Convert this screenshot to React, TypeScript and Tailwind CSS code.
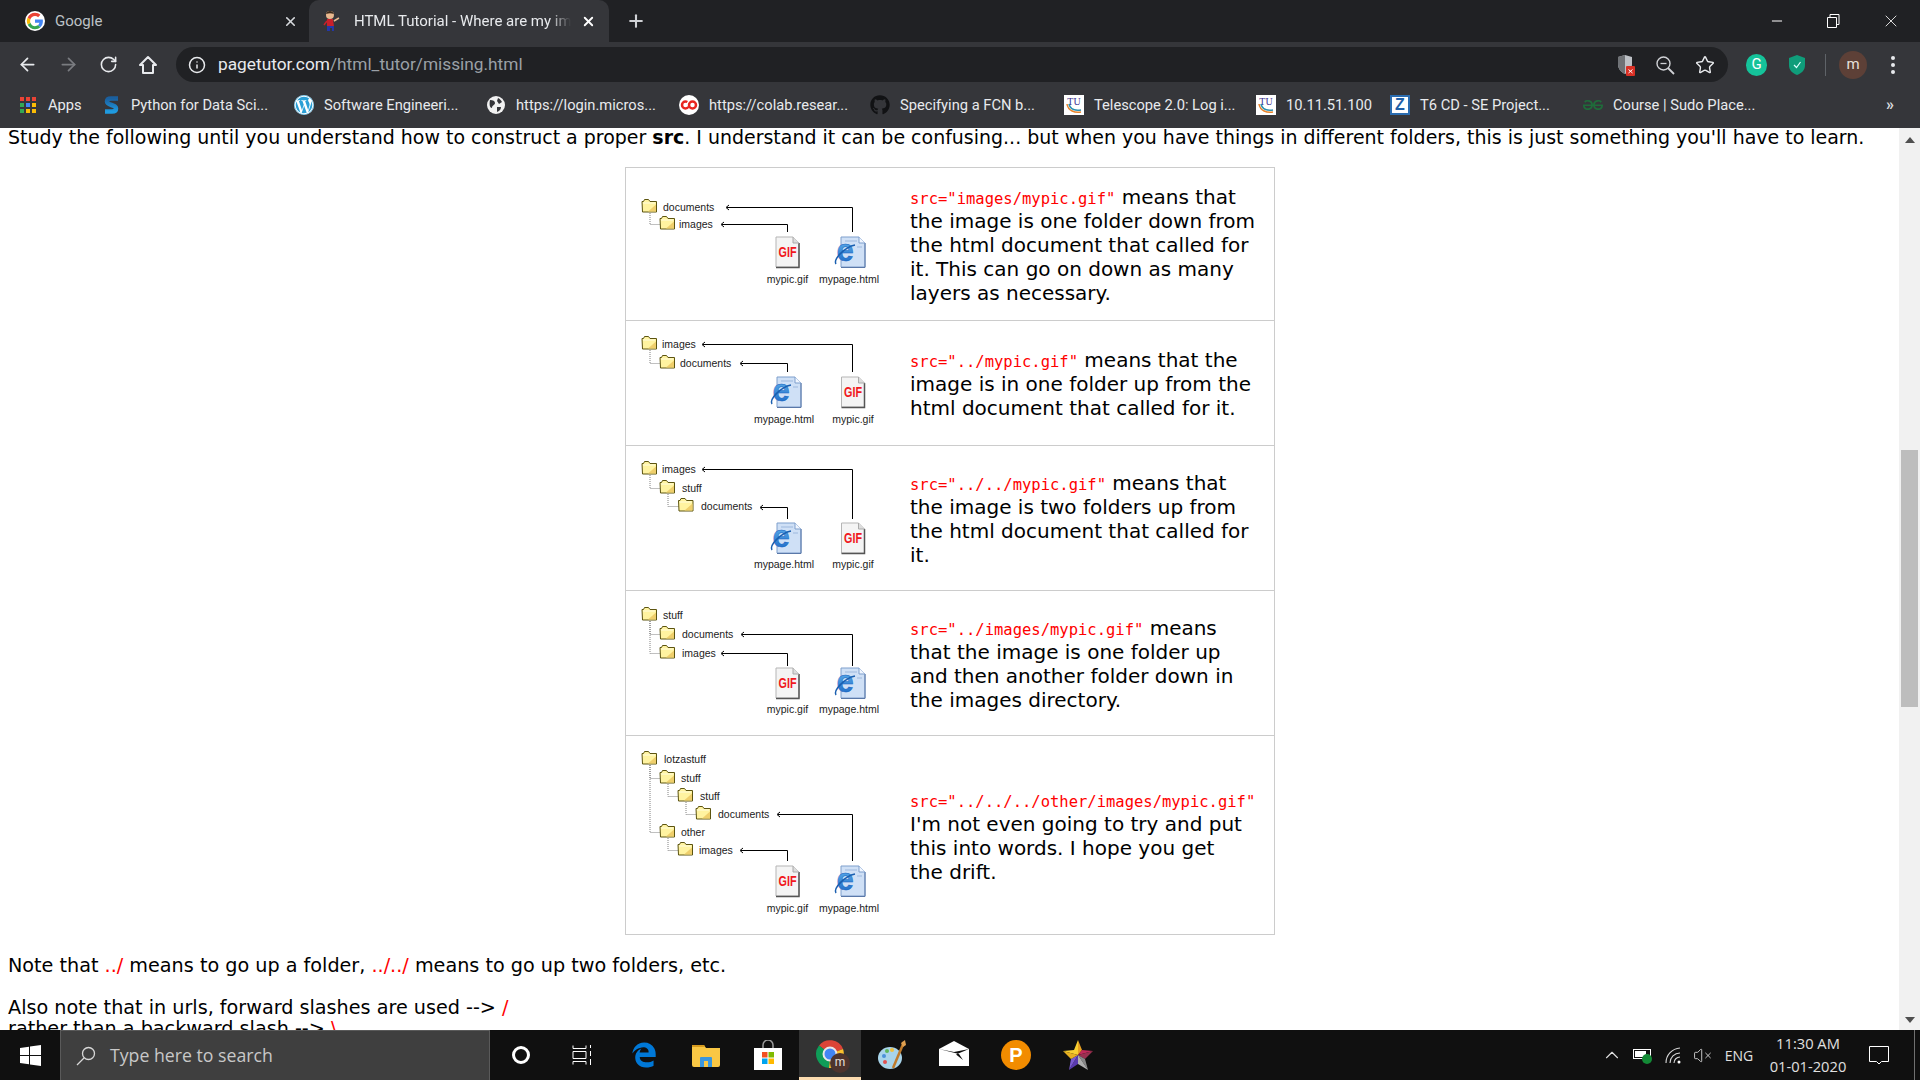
import React from 'react';
import { ArrowLeft, ArrowRight, RotateCw, Info, Star, X, Plus, Minus, ChevronUp, VolumeX } from 'lucide-react';
import { FaWordpress, FaGithub, FaEdgeLegacy } from 'react-icons/fa';
import { SiGeeksforgeeks } from 'react-icons/si';

type FolderNode = { cx: number; y: number; label: string; textX: number; parent?: number };
type Arrow = { from: number; to: number; y: number; bottom: number };
type FileIcon = { kind: 'gif' | 'ie'; cx: number; label: string; labelCx: number };
type Diagram = { top: number; height: number; folders: FolderNode[]; arrows: Arrow[]; files: FileIcon[]; iconY: number; labelY: number };

function Folder({ cx, y }: { cx: number; y: number }) {
  const x = cx - 7.5;
  const t = y - 8;
  return (
    <g>
      <path d={`M${x} ${t + 2.5}h1.5l1-2h4l1.5 2h6.5v10.5h-14z`} fill="#fff3a0" stroke="#5c5410" strokeWidth="1" />
      <path d={`M${x + 6} ${t + 12.5}l8-7v7z`} fill="#efcf6c" />
      <path d={`M${x + 1} ${t + 4}h12`} stroke="#fffde0" strokeWidth="1" />
    </g>
  );
}

function GifFile({ cx, y }: { cx: number; y: number }) {
  const x = cx - 11.5;
  return (
    <g>
      <path d={`M${x} ${y}h17l6 6v24h-23z`} fill="#f4f4f4" stroke="#b5b5b5" />
      <path d={`M${x + 23} ${y + 6}v24.5h-23`} fill="none" stroke="#555" strokeWidth="1.5" />
      <path d={`M${x + 17} ${y}v6h6`} fill="#ddd" stroke="#aaa" />
      <text
        x={cx - 9}
        y={y + 20}
        textLength="18"
        lengthAdjust="spacingAndGlyphs"
        fontFamily="Liberation Sans, sans-serif"
        fontWeight="700"
        fontSize="15"
        fill="#f01820"
      >
        GIF
      </text>
    </g>
  );
}

function IeFile({ cx, y }: { cx: number; y: number }) {
  const x = cx - 8;
  return (
    <g>
      <defs>
        <linearGradient id="ieBlue" x1="0" y1="0" x2="0" y2="1">
          <stop offset="0" stopColor="#6cc0f4" />
          <stop offset="1" stopColor="#1560c0" />
        </linearGradient>
      </defs>
      <path d={`M${x} ${y}h18l6 6v24h-24z`} fill="#cfe0f6" stroke="#7f9fcc" />
      <path d={`M${x + 24} ${y + 6}v24.500h-24`} fill="none" stroke="#5a78a8" />
      <path d={`M${x + 18} ${y}v6h6`} fill="#f0f6ff" stroke="#7f9fcc" />
      <path d={`M${x + 4} ${y + 4}h12M${x + 16} ${y + 10}h5`} stroke="#9db8dd" />
      <text x={cx - 4} y={y + 24} textAnchor="middle" fontFamily="Liberation Sans, sans-serif" fontWeight="700" fontSize="31" fill="url(#ieBlue)" stroke="#1560c0" strokeWidth=".4">
        e
      </text>
      <path d={`M${cx - 13} ${y + 27}c-3 -5 9 -17 19 -19`} fill="none" stroke="#1a5fb0" strokeWidth="1.5" />
    </g>
  );
}

function TreeImage({ d }: { d: Diagram }) {
  return (
    <svg width="284" height={d.height - 1} viewBox={`626 ${d.top} 284 ${d.height - 1}`} className="shrink-0 block">
      {d.folders.map((f, i) => {
        if (f.parent === undefined) return null;
        const p = d.folders[f.parent];
        return (
          <path
            key={i}
            d={`M${p.cx + 0.5} ${p.y + 6}V${f.y + 0.5}H${f.cx - 7}`}
            fill="none"
            stroke="#808080"
            strokeDasharray="1 1"
          />
        );
      })}
      {d.folders.map((f, i) => (
        <g key={i}>
          <Folder cx={f.cx} y={f.y} />
          <text x={f.textX} y={f.y + 4} fontFamily="Liberation Sans, sans-serif" fontSize="10.5" fill="#222">
            {f.label}
          </text>
        </g>
      ))}
      {d.arrows.map((a, i) => (
        <g key={i}>
          <path d={`M${a.from} ${a.y + 0.5}H${a.to + 0.5}V${a.bottom}`} fill="none" stroke="#000" />
          <path d={`M${a.from + 2} ${a.y - 2}l-3 2.500 3 2.500`} fill="none" stroke="#000" />
        </g>
      ))}
      {d.files.map((f, i) => (
        <g key={i}>
          {f.kind === 'gif' ? <GifFile cx={f.cx} y={d.iconY} /> : <IeFile cx={f.cx} y={d.iconY} />}
          <text x={f.labelCx} y={d.labelY} textAnchor="middle" fontFamily="Liberation Sans, sans-serif" fontSize="10.5" fill="#222">
            {f.label}
          </text>
        </g>
      ))}
    </svg>
  );
}

const rows: { d: Diagram; code: string; text: string; width: string }[] = [
  {
    code: 'src="images/mypic.gif"',
    text: ' means that the image is one folder down from the html document that called for it. This can go on down as many layers as necessary.',
    width: 'w-[350px]',
    d: {
      top: 168,
      height: 153,
      folders: [
        { cx: 649.5, y: 207, label: 'documents', textX: 663 },
        { cx: 667.5, y: 224, label: 'images', textX: 679, parent: 0 },
      ],
      arrows: [
        { from: 727, to: 852, y: 207, bottom: 232 },
        { from: 722, to: 787, y: 224, bottom: 232 },
      ],
      files: [
        { kind: 'gif', cx: 787.5, label: 'mypic.gif', labelCx: 787.5 },
        { kind: 'ie', cx: 849, label: 'mypage.html', labelCx: 849 },
      ],
      iconY: 237,
      labelY: 283,
    },
  },
  {
    code: 'src="../mypic.gif"',
    text: ' means that the image is in one folder up from the html document that called for it.',
    width: 'w-[350px]',
    d: {
      top: 321,
      height: 125,
      folders: [
        { cx: 649.5, y: 344, label: 'images', textX: 662 },
        { cx: 667.5, y: 363, label: 'documents', textX: 680, parent: 0 },
      ],
      arrows: [
        { from: 703, to: 852, y: 344, bottom: 372 },
        { from: 741, to: 787, y: 363, bottom: 372 },
      ],
      files: [
        { kind: 'ie', cx: 785, label: 'mypage.html', labelCx: 784 },
        { kind: 'gif', cx: 853, label: 'mypic.gif', labelCx: 853 },
      ],
      iconY: 377,
      labelY: 423,
    },
  },
  {
    code: 'src="../../mypic.gif"',
    text: ' means that the image is two folders up from the html document that called for it.',
    width: 'w-[350px]',
    d: {
      top: 446,
      height: 145,
      folders: [
        { cx: 649.5, y: 469, label: 'images', textX: 662 },
        { cx: 667.5, y: 488, label: 'stuff', textX: 682, parent: 0 },
        { cx: 686, y: 506, label: 'documents', textX: 701, parent: 1 },
      ],
      arrows: [
        { from: 703, to: 852, y: 469, bottom: 519 },
        { from: 761, to: 787, y: 507, bottom: 519 },
      ],
      files: [
        { kind: 'ie', cx: 785, label: 'mypage.html', labelCx: 784 },
        { kind: 'gif', cx: 853, label: 'mypic.gif', labelCx: 853 },
      ],
      iconY: 523,
      labelY: 568,
    },
  },
  {
    code: 'src="../images/mypic.gif"',
    text: ' means that the image is one folder up and then another folder down in the images directory.',
    width: 'w-[350px]',
    d: {
      top: 591,
      height: 145,
      folders: [
        { cx: 649.5, y: 615, label: 'stuff', textX: 663 },
        { cx: 667.5, y: 634, label: 'documents', textX: 682, parent: 0 },
        { cx: 667.5, y: 653, label: 'images', textX: 682, parent: 0 },
      ],
      arrows: [
        { from: 742, to: 852, y: 634, bottom: 666 },
        { from: 722, to: 787, y: 653, bottom: 666 },
      ],
      files: [
        { kind: 'gif', cx: 787.5, label: 'mypic.gif', labelCx: 787.5 },
        { kind: 'ie', cx: 849, label: 'mypage.html', labelCx: 849 },
      ],
      iconY: 668,
      labelY: 713,
    },
  },
  {
    code: 'src="../../../other/images/mypic.gif"',
    text: " I'm not even going to try and put this into words. I hope you get the drift.",
    width: 'w-[340px]',
    d: {
      top: 736,
      height: 199,
      folders: [
        { cx: 649.5, y: 759, label: 'lotzastuff', textX: 664 },
        { cx: 667.5, y: 778, label: 'stuff', textX: 681, parent: 0 },
        { cx: 685.5, y: 796, label: 'stuff', textX: 700, parent: 1 },
        { cx: 703.5, y: 814, label: 'documents', textX: 718, parent: 2 },
        { cx: 667.5, y: 832, label: 'other', textX: 681, parent: 0 },
        { cx: 685.5, y: 850, label: 'images', textX: 699, parent: 4 },
      ],
      arrows: [
        { from: 778, to: 852, y: 814, bottom: 861 },
        { from: 741, to: 787, y: 850, bottom: 861 },
      ],
      files: [
        { kind: 'gif', cx: 787.5, label: 'mypic.gif', labelCx: 787.5 },
        { kind: 'ie', cx: 849, label: 'mypage.html', labelCx: 849 },
      ],
      iconY: 866,
      labelY: 912,
    },
  },
];

function GoogleG() {
  return (
    <svg width="20" height="20" viewBox="0 0 48 48" className="rounded-full bg-white">
      <path fill="#4285F4" d="M43 24.5c0-1.4-.1-2.7-.4-4H24v7.6h10.7c-.5 2.500-1.900 4.600-4 6l6.200 4.800C40.600 35.500 43 30.500 43 24.500z" />
      <path fill="#34A853" d="M24 44c5.400 0 9.900-1.800 13-4.800l-6.200-4.800c-1.700 1.200-4 1.900-6.800 1.900-5.200 0-9.600-3.500-11.200-8.200L6.400 33C9.600 39.500 16.300 44 24 44z" />
      <path fill="#FBBC05" d="M12.800 28.100c-.8-2.500-.8-5.200 0-7.700L6.400 15.500c-2.700 5.300-2.700 11.600 0 17z" />
      <path fill="#EA4335" d="M24 11.900c2.900 0 5.500 1 7.500 2.900l5.600-5.600C33.700 6 29.300 4 24 4 16.300 4 9.600 8.500 6.400 15.500l6.400 4.900C14.400 15.400 18.800 11.900 24 11.900z" />
    </svg>
  );
}

function StickGuy() {
  return (
    <svg width="20" height="22" viewBox="0 0 20 22">
      <circle cx="9" cy="5" r="4" fill="#e9b98f" />
      <path d="M5 4c1-4 7-4 8 0-3-1-5-1-8 0z" fill="#3a2a1c" />
      <path d="M6 9h6l1 7H6z" fill="#c8202a" />
      <path d="M13 11l5-3" stroke="#e9b98f" strokeWidth="1.500" />
      <path d="M6 11l-3 4" stroke="#c8202a" strokeWidth="1.500" />
      <path d="M6 16h7v5h-2v-3H9v3H6z" fill="#2438a8" />
    </svg>
  );
}

function AppsGrid() {
  const colors = ['#ea4335', '#ea4335', '#ea4335', '#34a853', '#4285f4', '#fbbc05', '#34a853', '#fbbc05', '#fbbc05'];
  return (
    <div className="grid grid-cols-3 gap-[2px] w-[16px]">
      {colors.map((c, i) => (
        <svg key={i} width="4" height="4" className="block">
          <rect width="4" height="4" fill={c} />
        </svg>
      ))}
    </div>
  );
}

function TuLogo() {
  return (
    <svg width="20" height="20" viewBox="0 0 20 20">
      <rect width="20" height="20" fill="#fff" />
      <text x="10" y="10" textAnchor="middle" fontFamily="Liberation Serif, serif" fontSize="10" fill="#3b2f8f">
        TU
      </text>
      <path d="M3 9c1 7 8 9 14 8" fill="none" stroke="#e8832a" strokeWidth="1.500" />
      <path d="M5 9c1 5 6 7 12 6" fill="none" stroke="#2a8fb0" strokeWidth="1.500" />
    </svg>
  );
}

const bookmarks: { label: string; width: string; icon: React.ReactNode }[] = [
  { label: 'Apps', width: 'w-[83px]', icon: <AppsGrid /> },
  {
    label: 'Python for Data Sci...',
    width: 'w-[193px]',
    icon: (
      <svg width="15" height="18" viewBox="0 0 15 18">
        <defs>
          <linearGradient id="pyBlue" x1="0" y1="0" x2="0" y2="1">
            <stop offset="0" stopColor="#1a5f9e" />
            <stop offset="1" stopColor="#1f9be0" />
          </linearGradient>
        </defs>
        <path d="M14 2.500H7C4 2.500 3 4 3 5.500S4.500 8 7.500 9s4.500 1.500 4.500 3.500-1.500 3-4 3H1" fill="none" stroke="url(#pyBlue)" strokeWidth="4.500" />
      </svg>
    ),
  },
  { label: 'Software Engineeri...', width: 'w-[192px]', icon: <span className="flex w-5 h-5 items-center justify-center rounded-full bg-white"><FaWordpress size={20} color="#2a9fd6" /></span> },
  {
    label: 'https://login.micros...',
    width: 'w-[193px]',
    icon: (
      <svg width="20" height="20" viewBox="0 0 20 20">
        <circle cx="10" cy="10" r="9" fill="#f1f1f1" />
        <path d="M4 5c3 0 5 1 5 3s-3 2-3 5c-2 0-3-3-2-8zM12 3c2 1 3 2 4 4l-3 2-2-3zM11 12l4 0c0 3-2 4-4 5z" fill="#35363a" />
      </svg>
    ),
  },
  {
    label: 'https://colab.resear...',
    width: 'w-[191px]',
    icon: (
      <svg width="20" height="20" viewBox="0 0 20 20">
        <circle cx="10" cy="10" r="10" fill="#ffffff" />
        <circle cx="6.500" cy="10" r="3.500" fill="none" stroke="#e8251f" strokeWidth="2.500" strokeDasharray="16 6" strokeDashoffset="-2" />
        <circle cx="13.500" cy="10" r="3.500" fill="none" stroke="#e8251f" strokeWidth="2.500" />
      </svg>
    ),
  },
  { label: 'Specifying a FCN b...', width: 'w-[194px]', icon: <FaGithub size={20} color="#111214" /> },
  { label: 'Telescope 2.0: Log i...', width: 'w-[192px]', icon: <TuLogo /> },
  { label: '10.11.51.100', width: 'w-[134px]', icon: <TuLogo /> },
  {
    label: 'T6 CD - SE Project...',
    width: 'w-[193px]',
    icon: (
      <span className="flex w-5 h-5 items-center justify-center bg-white border-2 border-[#2a6cb0] font-['Liberation_Sans'] font-bold text-[#1f5fa8] text-[16px] leading-none">
        Z
      </span>
    ),
  },
  { label: 'Course | Sudo Place...', width: 'w-[160px]', icon: <SiGeeksforgeeks size={20} color="#1f6b3a" /> },
];

function TabBar() {
  return (
    <div className="h-[42px] bg-[#202124] flex items-stretch font-['Roboto'] text-[15px] shrink-0">
      <div className="w-[309px] flex items-center pl-[25px] pr-[11px] text-[#bdc1c6]">
        <GoogleG />
        <span className="ml-[10px] flex-1">Google</span>
        <X size={15} strokeWidth={2.500} color="#d8dade" />
      </div>
      <div className="w-[300px] bg-[#35363a] rounded-t-[10px] flex items-center pl-[12px] pr-[13px] text-[#e8eaed]">
        <StickGuy />
        <span className="ml-[13px] w-[218px] overflow-hidden whitespace-nowrap [mask-image:linear-gradient(to_right,black_90%,transparent)]">
          HTML Tutorial - Where are my images?
        </span>
        <X size={15} strokeWidth={3} color="#fff" className="ml-[10px]" />
      </div>
      <div className="flex items-center ml-[17px]">
        <Plus size={20} strokeWidth={2.500} color="#d0d2d6" />
      </div>
      <div className="ml-auto flex items-center text-white">
        <Minus size={16} strokeWidth={1.500} color="#fff" className="mr-[41px]" />
        <svg width="14" height="14" viewBox="0 0 14 14" className="mr-[41px]">
          <path d="M1.500 3.500h9v10h-9zM4 3.500v-3h9v10h-2.500" fill="none" stroke="#fff" />
        </svg>
        <X size={20} strokeWidth={1} color="#fff" className="mr-[19px]" />
      </div>
    </div>
  );
}

function Toolbar() {
  return (
    <div className="h-[45px] bg-[#35363a] flex items-center shrink-0">
      <div className="w-[176px] flex items-center pl-[17px] gap-[20px]">
        <ArrowLeft size={21} color="#e8eaed" />
        <ArrowRight size={21} color="#7a7c80" />
        <RotateCw size={19} color="#e8eaed" />
        <svg width="20" height="20" viewBox="0 0 20 20">
          <path d="M10 2L2 10h3v8h10v-8h3z" fill="none" stroke="#e8eaed" strokeWidth="2" strokeLinejoin="round" />
        </svg>
      </div>
      <div className="w-[1552px] h-[35px] rounded-full bg-[#202124] flex items-center pl-[12px] pr-[13px]">
        <Info size={18} color="#e8eaed" />
        <span className="ml-[12px] font-['Roboto'] text-[17.300px] text-[#e8eaed]">
          pagetutor.com<span className="text-[#9aa0a6]">/html_tutor/missing.html</span>
        </span>
        <div className="ml-auto flex items-center gap-[20px]">
          <svg width="18" height="22" viewBox="0 0 18 22">
            <path d="M8 1l7 2v7c0 5-3 8-7 10-4-2-7-5-7-10V3z" fill="#bdc1c6" />
            <path d="M8 1v19c-4-2-7-5-7-10V3z" fill="#6f7276" />
            <rect x="9" y="12" width="9" height="10" rx="1" fill="#d93025" />
            <path d="M11.500 15.500l4 3.500m0-3.500l-4 3.500" stroke="#fff" />
          </svg>
          <svg width="20" height="20" viewBox="0 0 20 20">
            <circle cx="8.500" cy="8.500" r="6.500" fill="none" stroke="#d0d2d6" strokeWidth="1.400" />
            <path d="M13 13l6 6" stroke="#d0d2d6" strokeWidth="1.800" />
            <path d="M5.500 8.500h6" stroke="#d0d2d6" strokeWidth="1.300" />
          </svg>
          <Star size={20} strokeWidth={1.700} color="#e8eaed" />
        </div>
      </div>
      <div className="flex-1 flex items-center pl-[18px]">
        <span className="w-[21px] h-[22px] rounded-full bg-[#15c39a] flex items-center justify-center text-white text-[15px] font-['Roboto']">G</span>
        <svg width="16" height="20" viewBox="0 0 16 20" className="ml-[22px]">
          <path d="M8 0l8 3v7c0 5-3 8-8 10-5-2-8-5-8-10V3z" fill="#0f9d7a" />
          <path d="M5 10l2.500 2.500L11.500 7" fill="none" stroke="#dff" strokeWidth="1.200" />
        </svg>
        <span className="ml-[20px] w-px h-[22px] bg-[#5f6368]" />
        <span className="ml-[13px] w-[28px] h-[28px] rounded-full bg-[#5d4037] flex items-center justify-center text-[#e8e0dc] text-[15px] font-['Roboto']">m</span>
        <svg width="4" height="18" viewBox="0 0 4 18" className="ml-[24px]">
          <circle cx="2" cy="2" r="2" fill="#e8eaed" />
          <circle cx="2" cy="9" r="2" fill="#e8eaed" />
          <circle cx="2" cy="16" r="2" fill="#e8eaed" />
        </svg>
      </div>
    </div>
  );
}

function BookmarkBar() {
  return (
    <div className="h-[41px] pb-[5px] bg-[#35363a] flex items-center pl-[18px] font-['Roboto'] text-[14.700px] text-[#e8eaed] shrink-0">
      {bookmarks.map((b) => (
        <div key={b.label} className={`${b.width} flex items-center shrink-0`}>
          <span className="w-5 h-5 flex items-center justify-center shrink-0">{b.icon}</span>
          <span className="ml-[10px] whitespace-nowrap">{b.label}</span>
        </div>
      ))}
      <span className="ml-auto mr-[26px] text-[16px] font-bold text-[#d8dade]">»</span>
    </div>
  );
}

function Scrollbar() {
  return (
    <div className="w-[21px] h-full bg-[#f1f1f1] flex flex-col items-center shrink-0">
      <svg width="10" height="6" viewBox="0 0 10 6" className="mt-[9px]">
        <path d="M5 0l5 6H0z" fill="#505050" />
      </svg>
      <div className="w-[17px] h-[257px] mt-[307px] bg-[#bdbdbd]" />
      <svg width="10" height="6" viewBox="0 0 10 6" className="mt-auto mb-[7px]">
        <path d="M5 6l5-6H0z" fill="#505050" />
      </svg>
    </div>
  );
}

function Page() {
  return (
    <div className="h-[902px] flex bg-white overflow-hidden shrink-0">
      <div className="w-[1899px] h-full overflow-hidden font-['DejaVu_Sans'] text-[19.200px] leading-[21px] text-black pl-[8px]">
        <p className="whitespace-nowrap text-[18.980px] leading-[19px]">
          Study the following until you understand how to construct a proper <b>src</b>. I understand it can be confusing... but when you have things in
          different folders, this is just something you'll have to learn.
        </p>
        <div className="ml-[617px] mt-[20px] w-[650px] border border-[#cccccc]">
          {rows.map((r, i) => (
            <div key={i} className={`flex items-center ${i < rows.length - 1 ? 'border-b border-[#cccccc]' : ''}`}>
              <TreeImage d={r.d} />
              <div className={`${r.width} text-[20px] leading-[24px] pt-[2px]`}>
                <span className="font-['DejaVu_Sans_Mono'] text-[15.500px] leading-none whitespace-nowrap text-[#ff0000]">{r.code}</span>
                {i === rows.length - 1 ? <br /> : null}
                {r.text}
              </div>
            </div>
          ))}
        </div>
        <p className="mt-[20px]">
          Note that <span className="text-[#ff0000]">../</span> means to go up a folder, <span className="text-[#ff0000]">../../</span> means to go up two
          folders, etc.
        </p>
        <p className="mt-[21px]">
          Also note that in urls, forward slashes are used --&gt; <span className="text-[#ff0000]">/</span>
          <br />
          rather than a backward slash --&gt; <span className="text-[#ff0000]">\</span>
        </p>
      </div>
      <Scrollbar />
    </div>
  );
}

function TaskCell({ width, active, children }: { width: string; active?: boolean; children: React.ReactNode }) {
  return (
    <div className={`${width} h-full flex items-center justify-center shrink-0 ${active ? 'bg-[#333333] border-b-[3px] border-[#fcdcb0]' : ''}`}>
      {children}
    </div>
  );
}

function Taskbar() {
  return (
    <div className="h-[50px] bg-[#101010] flex items-center font-['Open_Sans'] shrink-0">
      <div className="w-[60px] h-full flex items-center justify-center shrink-0">
        <svg width="21" height="21" viewBox="0 0 21 21">
          <path d="M0 3l9-1.300V10H0zM10 1.500L21 0v10H10zM0 11h9v8.300L0 18zM10 11h11v10l-11-1.500z" fill="#fff" />
        </svg>
      </div>
      <div className="w-[430px] h-full bg-[#3f3f3f] border-t border-x border-[#5a5a5a] flex items-center pl-[15px] shrink-0">
        <svg width="20" height="20" viewBox="0 0 20 20">
          <circle cx="12.500" cy="7.500" r="6" fill="none" stroke="#d8d8d8" strokeWidth="1.300" />
          <path d="M8 12l-7 7" stroke="#d8d8d8" strokeWidth="1.300" />
        </svg>
        <span className="ml-[14px] text-[17.700px] text-[#c8c8c8]">Type here to search</span>
      </div>
      <TaskCell width="w-[61px]">
        <span className="w-[18px] h-[18px] rounded-full border-[3px] border-white" />
      </TaskCell>
      <TaskCell width="w-[61px]">
        <svg width="20" height="20" viewBox="0 0 20 20">
          <path d="M1 .5v3h13v-3M1 6.500h13v7H1zM1 19.500v-3h13v3M18.500 0v3M18.500 6v5M18.500 14v6" fill="none" stroke="#fff" />
        </svg>
      </TaskCell>
      <TaskCell width="w-[63px]">
        <FaEdgeLegacy size={26} color="#0078d7" />
      </TaskCell>
      <TaskCell width="w-[62px]">
        <svg width="28" height="24" viewBox="0 0 28 24">
          <path d="M0 2h12l2 3h14v17a2 2 0 0 1-2 2H2a2 2 0 0 1-2-2z" fill="#f9c744" />
          <path d="M0 2h12l1 2H0z" fill="#d69a1e" />
          <path d="M8 24v-9a1 1 0 0 1 1-1h10a1 1 0 0 1 1 1v9h-4v-6h-4v6z" fill="#3a96dd" />
        </svg>
      </TaskCell>
      <TaskCell width="w-[62px]">
        <svg width="28" height="30" viewBox="0 0 28 30">
          <path d="M9 8V5a5 5 0 0 1 10 0v3" fill="none" stroke="#9a9a9a" strokeWidth="1.500" />
          <path d="M0 8h28v22H0z" fill="#fff" />
          <rect x="8" y="12" width="5.500" height="5.500" fill="#f25022" />
          <rect x="14.500" y="12" width="5.500" height="5.500" fill="#7fba00" />
          <rect x="8" y="18.500" width="5.500" height="5.500" fill="#00a4ef" />
          <rect x="14.500" y="18.500" width="5.500" height="5.500" fill="#ffb900" />
        </svg>
      </TaskCell>
      <TaskCell width="w-[62px]" active>
        <span className="relative w-[30px] h-[30px] block">
          <svg width="30" height="30" viewBox="0 0 30 30">
            <path d="M15 15L4 6.500A14 14 0 0 1 28 10z" fill="#db4437" />
            <path d="M15 15L28 10A14 14 0 0 1 14 29z" fill="#fbc02d" />
            <path d="M15 15L14 29A14 14 0 0 1 4 6.500z" fill="#0f9d58" />
            <circle cx="15" cy="15" r="6.500" fill="#4285f4" stroke="#e8e8e8" strokeWidth="2" />
          </svg>
          <span className="absolute -right-[5px] -bottom-[4px] w-[20px] h-[20px] rounded-full bg-[#4e342e] text-[#e8e0dc] text-[12px] leading-[19px] text-center font-['Roboto']">m</span>
        </span>
      </TaskCell>
      <TaskCell width="w-[62px]">
        <svg width="30" height="32" viewBox="0 0 30 32">
          <ellipse cx="13" cy="19" rx="12" ry="11" fill="#a8d4ea" />
          <circle cx="7" cy="17" r="2" fill="#4a90d9" />
          <circle cx="10" cy="12" r="2" fill="#5cb85c" />
          <circle cx="15" cy="11" r="2" fill="#f0c040" />
          <circle cx="8" cy="23" r="2" fill="#e05050" />
          <path d="M27 3L16 29" stroke="#c07a2a" strokeWidth="2.500" />
          <path d="M24 4l4-3 1 5-3 2z" fill="#e0a050" />
        </svg>
      </TaskCell>
      <TaskCell width="w-[62px]">
        <svg width="30" height="28" viewBox="0 0 30 28">
          <path d="M0 8L15 0l15 8v17H0z" fill="#fff" />
          <path d="M0 8l20 5 4 6-7-5.500L30 8 15 11z" fill="#101010" />
        </svg>
      </TaskCell>
      <TaskCell width="w-[62px]">
        <span className="w-[30px] h-[30px] rounded-full bg-[#f28c00] flex items-center justify-center text-white font-bold text-[20px] leading-none font-['Liberation_Sans']">P</span>
      </TaskCell>
      <TaskCell width="w-[62px]">
        <svg width="30" height="30" viewBox="0 0 30 30">
          <path d="M15 0l4 10-4 5z" fill="#e8a020" />
          <path d="M19 10l11 1-15 4z" fill="#c22a5a" />
          <path d="M15 15l15-4-8 8z" fill="#9a3050" />
          <path d="M15 15l7 4 3 11z" fill="#888" />
          <path d="M15 15l10 15-10-6z" fill="#b0b0b0" />
          <path d="M15 15v9l-9 6z" fill="#5a3ab0" />
          <path d="M15 15l-9 15 2-11z" fill="#7a5ad0" />
          <path d="M15 0v15L0 11l11-1z" fill="#f8d030" />
          <path d="M0 11l15 4-7 4z" fill="#e8b020" />
        </svg>
      </TaskCell>
      <div className="flex-1 h-full flex items-center text-[#e0e0e0] relative">
        <ChevronUp size={22} strokeWidth={1.200} color="#e0e0e0" className="ml-[492px]" />
        <svg width="20" height="18" viewBox="0 0 20 18" className="ml-[10px]">
          <rect x=".5" y="3.500" width="17" height="9" fill="none" stroke="#fff" />
          <rect x="2" y="5" width="11" height="6" fill="#fff" />
          <circle cx="14" cy="13" r="5" fill="#138a36" />
        </svg>
        <svg width="18" height="18" viewBox="0 0 18 18" className="ml-[12px]">
          <path d="M1 17A15 15 0 0 1 15 2M5 17a10 10 0 0 1 10-10M9 17a6 6 0 0 1 6-6" fill="none" stroke="#d8d8d8" strokeWidth="1.100" />
          <circle cx="14" cy="16" r="1.500" fill="#fff" />
        </svg>
        <VolumeX size={19} strokeWidth={1.100} color="#e0e0e0" className="ml-[10px]" />
        <span className="ml-[12px] text-[14px] w-[30px] text-center">ENG</span>
        <div className="ml-[10px] w-[88px] text-center text-[14.700px] leading-[23px]">
          <div>11:30 AM</div>
          <div>01-01-2020</div>
        </div>
        <svg width="20" height="20" viewBox="0 0 20 20" className="ml-[17px]">
          <path d="M.5 1.500h19v15h-7l-2.500 2.500-2.500-2.500h-7z" fill="none" stroke="#fff" />
        </svg>
        <span className="absolute right-[5px] top-0 bottom-0 w-px bg-[#707070]" />
      </div>
    </div>
  );
}

export default function App() {
  return (
    <div className="w-[1920px] h-[1080px] overflow-hidden flex flex-col">
      <TabBar />
      <Toolbar />
      <BookmarkBar />
      <Page />
      <Taskbar />
    </div>
  );
}
